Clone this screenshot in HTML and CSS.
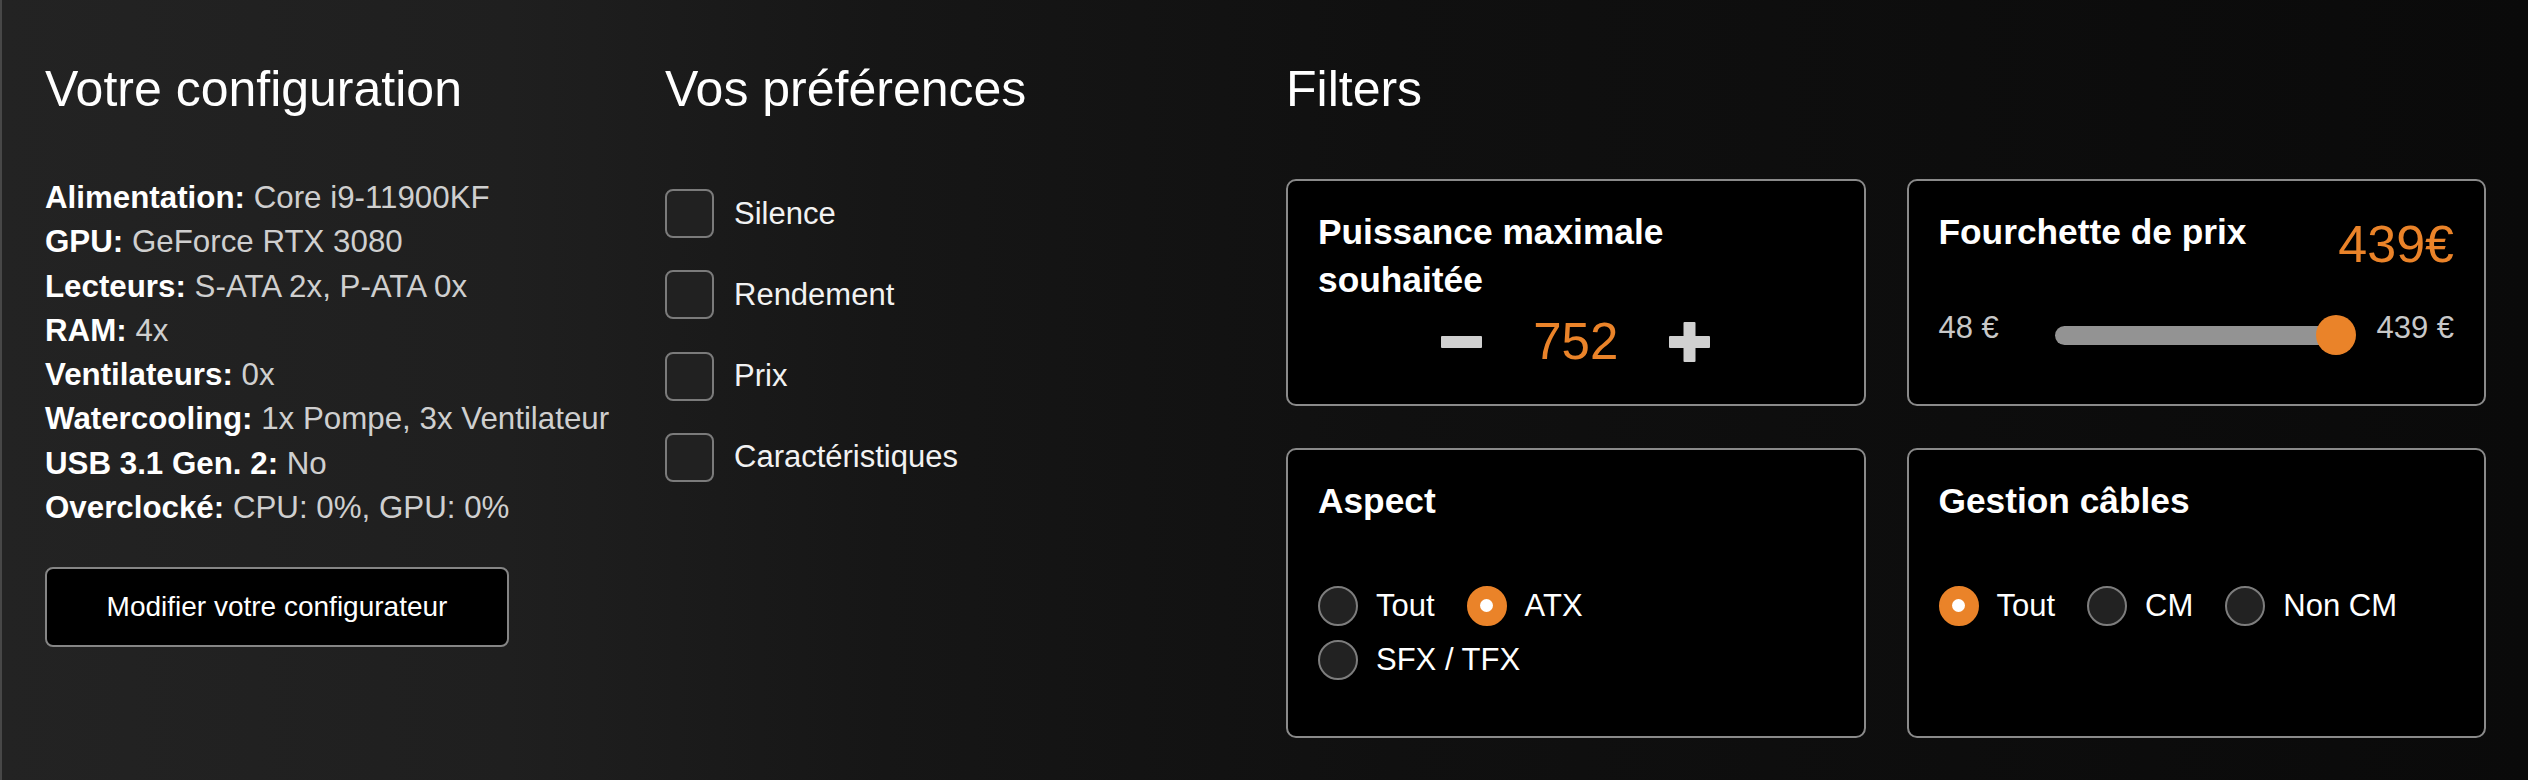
FILE: index.html
```html
<!DOCTYPE html>
<html lang="fr">
<head>
    <meta charset="UTF-8">
    <meta name="viewport" content="width=device-width, initial-scale=1.0">
    <title>Votre configuration</title>
    <link rel="stylesheet" href="styles.css">
</head>
<body>
    <div class="page">
        <!-- left column: current build -->
        <section class="col">
            <h2 class="col-title">Votre configuration</h2>
            <ul class="specs">
                <li><b>Alimentation:</b> Core i9-11900KF</li>
                <li><b>GPU:</b> GeForce RTX 3080</li>
                <li><b>Lecteurs:</b> S-ATA 2x, P-ATA 0x</li>
                <li><b>RAM:</b> 4x</li>
                <li><b>Ventilateurs:</b> 0x</li>
                <li><b>Watercooling:</b> 1x Pompe, 3x Ventilateur</li>
                <li><b>USB 3.1 Gen. 2:</b> No</li>
                <li><b>Overclocké:</b> CPU: 0%, GPU: 0%</li>
            </ul>
            <button type="button" class="btn-edit">Modifier votre configurateur</button>
        </section>

        <!-- middle column: preferences -->
        <section class="col">
            <h2 class="col-title">Vos préférences</h2>
            <div class="prefs">
                <label class="pref"><span class="checkbox"></span>Silence</label>
                <label class="pref"><span class="checkbox"></span>Rendement</label>
                <label class="pref"><span class="checkbox"></span>Prix</label>
                <label class="pref"><span class="checkbox"></span>Caractéristiques</label>
            </div>
        </section>

        <!-- right column: filters -->
        <section class="col">
            <h2 class="col-title">Filters</h2>
            <div class="filter-grid">
                <div class="card">
                    <h3 class="card-title">Puissance maximale<br>souhaitée</h3>
                    <div class="stepper">
                        <span class="step-btn">
                            <svg width="41" height="12" viewBox="0 0 41 12"><rect x="0" y="0" width="41" height="12" rx="1" fill="currentColor"/></svg>
                        </span>
                        <span class="step-value">752</span>
                        <span class="step-btn">
                            <svg width="41" height="40" viewBox="0 0 41 40"><rect x="0" y="14" width="41" height="12" rx="1" fill="currentColor"/><rect x="14.5" y="0" width="12" height="40" rx="1" fill="currentColor"/></svg>
                        </span>
                    </div>
                </div>

                <div class="card">
                    <div class="price-head">
                        <h3 class="card-title">Fourchette de prix</h3>
                        <span class="price-value">439€</span>
                    </div>
                    <div class="slider">
                        <span class="slider-label">48 €</span>
                        <div class="range">
                            <div class="range-track"></div>
                            <div class="range-thumb"></div>
                        </div>
                        <span class="slider-label">439 €</span>
                    </div>
                </div>

                <div class="card">
                    <h3 class="card-title">Aspect</h3>
                    <div class="options options-narrow">
                        <label class="option"><span class="radio"></span>Tout</label>
                        <label class="option"><span class="radio is-on"></span>ATX</label>
                        <label class="option"><span class="radio"></span>SFX / TFX</label>
                    </div>
                </div>

                <div class="card">
                    <h3 class="card-title">Gestion câbles</h3>
                    <div class="options">
                        <label class="option"><span class="radio is-on"></span>Tout</label>
                        <label class="option"><span class="radio"></span>CM</label>
                        <label class="option"><span class="radio"></span>Non CM</label>
                    </div>
                </div>
            </div>
        </section>
    </div>
</body>
</html>
```

FILE: styles.css
```css
body {
    margin: 0;
    font-family: "Liberation Sans", Arial, sans-serif;
    color: #fff;
    background: #0a0a0a;
}
.page {
    box-sizing: border-box;
    height: 780px;
    display: grid;
    grid-template-columns: 620px 621px 1fr;
    padding: 59px 42px 0 43px;
    border-left: 2px solid #474747;
    background: linear-gradient(90deg, #232323 0%, #1f1f1f 20%, #161616 35%, #101010 55%, #0a0a0a 100%);
}
.col-title {
    margin: 0;
    font-size: 50px;
    font-weight: 300;
    line-height: 60px;
}

/* config column */
.specs {
    list-style: none;
    margin: 57px 0 0;
    padding: 0;
    font-size: 31.3px;
    line-height: 44.3px;
    color: #cfcfcf;
}
.specs b {
    color: #fff;
}
.btn-edit {
    display: block;
    margin-top: 37px;
    width: 464px;
    height: 80px;
    background: #000;
    color: #fff;
    border: 2px solid #858585;
    border-radius: 8px;
    font-family: inherit;
    font-size: 28px;
    cursor: pointer;
}

/* preferences column */
.prefs {
    margin-top: 70px;
    display: flex;
    flex-direction: column;
    gap: 32.3px;
}
.pref {
    display: flex;
    align-items: center;
    gap: 20px;
    font-size: 31px;
    color: #f2f2f2;
}
.checkbox {
    box-sizing: border-box;
    width: 49px;
    height: 49px;
    border: 2px solid #7b7b7b;
    border-radius: 8px;
    background: #212121;
}

/* filters column */
.filter-grid {
    margin-top: 60px;
    display: grid;
    grid-template-columns: 1fr 1fr;
    grid-template-rows: 227px 290px;
    column-gap: 41px;
    row-gap: 41.5px;
}
.card {
    box-sizing: border-box;
    background: #000;
    border: 2px solid #8a8a8a;
    border-radius: 10px;
    padding: 27px 30px;
}
.card-title {
    margin: 0;
    font-size: 35.3px;
    font-weight: bold;
    line-height: 48px;
}
.stepper {
    margin-top: 8px;
    height: 60px;
    display: flex;
    justify-content: center;
    align-items: center;
    gap: 51px;
}
.step-btn {
    display: flex;
    color: #d0d0d0;
    cursor: pointer;
}
.step-value {
    font-size: 51px;
    font-weight: 300;
    line-height: 60px;
    color: #ea8329;
}
.price-head {
    display: flex;
    justify-content: space-between;
    align-items: flex-start;
}
.price-value {
    font-size: 52px;
    font-weight: 300;
    line-height: 72px;
    color: #ea8329;
}
.slider {
    margin-top: 35px;
    height: 40px;
    display: flex;
    align-items: center;
}
.slider-label {
    font-size: 31px;
    color: #c8c8c8;
    margin-bottom: 14px;
}
.range {
    flex: 1;
    display: flex;
    align-items: center;
    margin: 0 20px 0 56px;
}
.range-track {
    flex: 1;
    height: 19px;
    margin-right: -20px;
    background: #939393;
    border-radius: 10px;
}
.range-thumb {
    width: 40px;
    height: 40px;
    border-radius: 50%;
    background: #ea8329;
}
.options {
    margin-top: 61px;
    display: flex;
    flex-wrap: wrap;
    column-gap: 32px;
    row-gap: 14px;
}
.options-narrow {
    max-width: 400px;
}
.option {
    display: flex;
    align-items: center;
    gap: 18px;
    font-size: 31px;
    line-height: 40px;
}
.radio {
    box-sizing: border-box;
    width: 40px;
    height: 40px;
    border-radius: 50%;
    border: 2px solid #7d7d7d;
    background: #222;
    display: flex;
    align-items: center;
    justify-content: center;
}
.radio.is-on {
    background: #ea8329;
    border-color: #ea8329;
}
.radio.is-on::after {
    content: "";
    width: 13px;
    height: 13px;
    border-radius: 50%;
    background: #fff;
}
```
